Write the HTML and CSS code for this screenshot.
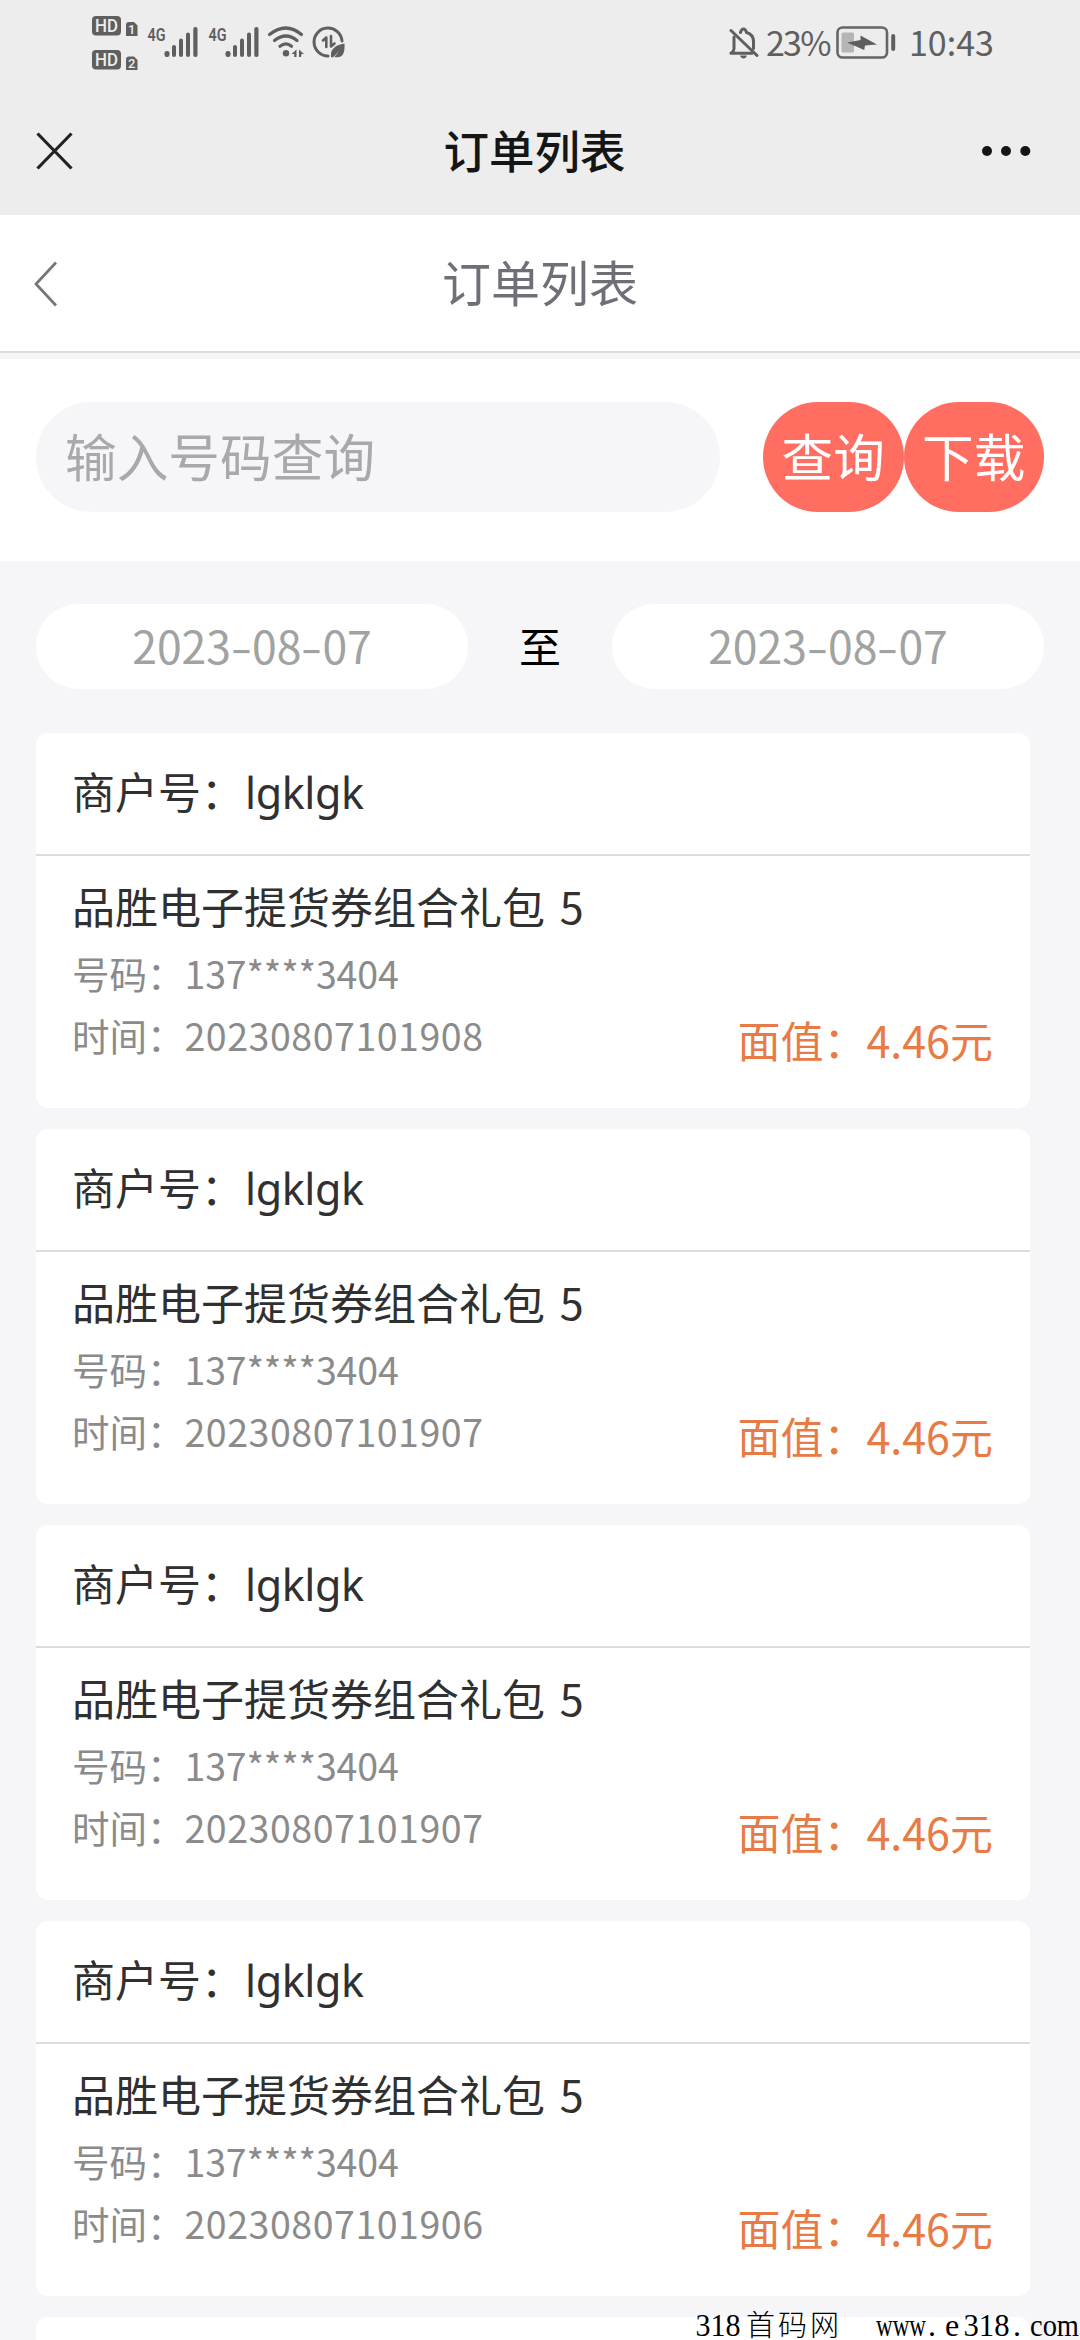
FILE: index.html
```html
<!DOCTYPE html>
<html lang="zh-CN">
<head>
<meta charset="utf-8">
<title>订单列表</title>
<link rel="stylesheet" href="styles.css">
</head>
<body>
<div class="screen">
  <div class="status">
    <svg class="status-left" width="260" height="64" viewBox="88 10 260 64">
      <g class="ink">
        <rect x="92" y="16" width="29" height="19.500" rx="4"/>
        <path d="M129 22h5l3.500 3.500V36H126V25q0-3 3-3z"/>
        <rect x="92" y="50" width="29" height="19.500" rx="4"/>
        <path d="M129 56.500h5l3.500 3.500v10H126V59.500q0-3 3-3z"/>
      </g>
      <g class="badge-text">
        <text x="95" y="32" font-size="18" textLength="23" lengthAdjust="spacingAndGlyphs">HD</text>
        <text x="95" y="66" font-size="18" textLength="23" lengthAdjust="spacingAndGlyphs">HD</text>
        <text x="128" y="34" font-size="13">1</text>
        <text x="128" y="68" font-size="13">2</text>
      </g>
      <g class="net-text">
        <text x="147.500" y="40.500" font-size="19" textLength="18" lengthAdjust="spacingAndGlyphs">4G</text>
        <text x="208.500" y="40.500" font-size="19" textLength="18" lengthAdjust="spacingAndGlyphs">4G</text>
      </g>
      <g class="ink">
        <rect x="164.500" y="51" width="5" height="6" rx="2.200"/><rect x="172" y="45" width="4" height="12" rx="2"/><rect x="179" y="38.500" width="4" height="18.500" rx="2"/><rect x="186" y="32.500" width="4" height="24.500" rx="2"/><rect x="193.300" y="27" width="4.200" height="30" rx="2"/>
        <rect x="225.500" y="51" width="5" height="6" rx="2.200"/><rect x="233" y="45" width="4" height="12" rx="2"/><rect x="240" y="38.500" width="4" height="18.500" rx="2"/><rect x="247" y="32.500" width="4" height="24.500" rx="2"/><rect x="254.300" y="27" width="4.200" height="30" rx="2"/>
        <circle cx="286" cy="53.300" r="3.200"/>
        <path d="M296.500 49.500V57h-2.300v-3h-2.700zM299 49.500l5 4.500h-2.500l-.5 3h-2z"/>
      </g>
      <g class="line">
        <path d="M269.500 34.500q16.500-13 32 0M274.500 40.500q11.500-9 22.500 0M280 46.200q6-4.600 11.500 0" stroke-width="3.200"/>
        <path d="M328 56A14 14 0 1 1 342 41" stroke-width="3"/>
        <path d="M323 40.500l3.300-3V47M331 36v10.500l3.500-3" stroke-width="2.600"/>
      </g>
      <path class="ink" d="M331 57q-1.500-11 13.500-13.500q1 16-10 13.500l5-6.500-6.500 7z"/>
    </svg>
    <div class="status-right">
      <svg width="30" height="34" viewBox="728 24 30 34">
        <g class="line" stroke-width="3">
          <path d="M730 29.500L756 54.500"/>
          <path d="M733 36v12q0 2-3 4.300h21M739.500 31.500q1-3.500 3-3.500t3 3.500q7 2 7 9v7"/>
        </g>
        <path class="ink" d="M739 54.500h7q-1 3-3.500 3t-3.500-3z"/>
      </svg>
      <span class="pct">23%</span>
      <svg width="62" height="34" viewBox="834 25 62 34">
        <rect x="836.500" y="27.500" width="49.500" height="30" rx="5" fill="none" stroke="#666" stroke-width="2.600"/>
        <rect x="840.500" y="32.500" width="12.500" height="20" rx="1.500" fill="#b5b5b5"/>
        <path class="ink" d="M846 42.500l13.500-2.500v-4.500L876 44.500l-12 1-.8 4.500z"/>
        <rect class="ink" x="890.200" y="34" width="4" height="17" rx="2"/>
      </svg>
      <span class="clock">10:43</span>
    </div>
  </div>
  <div class="wxbar">
    <svg width="40" height="40" viewBox="0 0 40 40"><path d="M2.500 2.500l34 35M36.500 2.500l-34 35" stroke="#222" stroke-width="3.200" fill="none"/></svg>
    <h1 class="wxtitle">订单列表</h1>
    <svg width="50" height="12" viewBox="0 0 50 12"><circle cx="6" cy="6" r="5" fill="#151515"/><circle cx="25" cy="6" r="5" fill="#151515"/><circle cx="44.300" cy="6" r="5" fill="#151515"/></svg>
  </div>
  <div class="nav">
    <svg width="24" height="46" viewBox="0 0 24 46"><path d="M22 1.500L2 23l20 21.500" stroke="#777" stroke-width="2.800" fill="none"/></svg>
    <h2 class="navtitle">订单列表</h2>
  </div>
  <div class="search">
    <div class="field">输入号码查询</div>
    <div class="btn">查询</div>
    <div class="btn">下载</div>
  </div>
  <div class="dates">
    <div class="pill">2023<i>-</i>08<i>-</i>07</div>
    <span class="to">至</span>
    <div class="pill">2023<i>-</i>08<i>-</i>07</div>
  </div>
  <div class="list">
    <div class="card">
      <div class="merchant">商户号：<span class="mid">lgklgk</span></div>
      <div class="body">
        <div class="name">品胜电子提货券组合礼包 5</div>
        <div class="row phone">号码：<span>137<b>****</b>3404</span></div>
        <div class="row time">时间：<span>20230807101908</span></div>
        <div class="price">面值：<span>4.46</span>元</div>
      </div>
    </div>
    <div class="card">
      <div class="merchant">商户号：<span class="mid">lgklgk</span></div>
      <div class="body">
        <div class="name">品胜电子提货券组合礼包 5</div>
        <div class="row phone">号码：<span>137<b>****</b>3404</span></div>
        <div class="row time">时间：<span>20230807101907</span></div>
        <div class="price">面值：<span>4.46</span>元</div>
      </div>
    </div>
    <div class="card">
      <div class="merchant">商户号：<span class="mid">lgklgk</span></div>
      <div class="body">
        <div class="name">品胜电子提货券组合礼包 5</div>
        <div class="row phone">号码：<span>137<b>****</b>3404</span></div>
        <div class="row time">时间：<span>20230807101907</span></div>
        <div class="price">面值：<span>4.46</span>元</div>
      </div>
    </div>
    <div class="card">
      <div class="merchant">商户号：<span class="mid">lgklgk</span></div>
      <div class="body">
        <div class="name">品胜电子提货券组合礼包 5</div>
        <div class="row phone">号码：<span>137<b>****</b>3404</span></div>
        <div class="row time">时间：<span>20230807101906</span></div>
        <div class="price">面值：<span>4.46</span>元</div>
      </div>
    </div>
    <div class="card"></div>
  </div>
  <svg class="watermark" width="390" height="36" viewBox="690 2304 390 36">
    <text x="695.500" y="2335.500" textLength="45" lengthAdjust="spacingAndGlyphs">318</text>
    <text class="wm-cjk" x="746" y="2336" textLength="93" lengthAdjust="spacing">首码网</text>
    <text x="876" y="2335.500" textLength="50" lengthAdjust="spacingAndGlyphs">www</text>
    <text x="928" y="2335.500">.</text>
    <text x="945" y="2335.500">e</text>
    <text x="963.500" y="2335.500" textLength="46" lengthAdjust="spacingAndGlyphs">318</text>
    <text x="1013" y="2335.500">.</text>
    <text x="1030" y="2335.500" textLength="49" lengthAdjust="spacingAndGlyphs">com</text>
  </svg>
</div>
</body>
</html>
```
FILE: styles.css
```css
* { box-sizing: border-box; }
body { margin: 0; }
.screen {
  position: relative;
  width: 1080px;
  height: 2340px;
  overflow: hidden;
  background: #f6f6f8;
  font-family: "Noto Sans CJK SC", "Noto Sans", sans-serif;
}
svg { display: block; flex: none; }
.ink { fill: #5f5f5f; }
.line { fill: none; stroke: #5f5f5f; stroke-linecap: round; stroke-linejoin: round; }
.badge-text { fill: #ededed; font-family: Roboto, sans-serif; font-weight: 500; }
.net-text { fill: #5f5f5f; font-family: Roboto, sans-serif; font-weight: 600; }

.status {
  display: flex;
  justify-content: space-between;
  height: 86px;
  padding: 10px 87px 0 88px;
  background: #ededed;
}
.status-right {
  display: flex;
  align-items: center;
  height: 64px;
  color: #5f5f5f;
  font-size: 34px;
  line-height: 40px;
}
.pct { margin: 0 6px 0 7px; width: 63px; letter-spacing: -1.800px; white-space: nowrap; }
.clock { margin-left: 12px; width: 84px; white-space: nowrap; }

.wxbar {
  display: flex;
  align-items: center;
  justify-content: space-between;
  height: 129px;
  padding: 0 49px 0 35px;
  background: #ededed;
}
.wxtitle { margin: 0 0 3px 13px; color: #151515; font-size: 45.500px; line-height: 60px; font-weight: 500; }

.nav {
  display: flex;
  align-items: center;
  height: 144px;
  padding: 0 0 1px 34px;
  border-bottom: 6px solid #f6f6f7;
  background: linear-gradient(#dcdcdc, #dcdcdc) 0 136px / 100% 2px no-repeat #fff;
}
.navtitle { margin: 0 0 5px 384px; color: #6f6f78; font-size: 49px; line-height: 64px; font-weight: 400; }

.search {
  display: flex;
  height: 202px;
  padding: 43px 36px 0;
  background: #fff;
}
.field, .btn { height: 110px; border-radius: 55px; font-size: 51.700px; line-height: 105px; }
.field { width: 684px; margin-right: 43px; padding-left: 29px; background: #f6f6f8; color: #a9a9ab; }
.btn { width: 140.500px; background: #ff6e60; color: #fff; text-align: center; }

.dates {
  display: flex;
  justify-content: space-between;
  align-items: center;
  padding: 43px 36px 44px;
}
.pill {
  width: 432px;
  height: 85px;
  border-radius: 43px;
  background: #fff;
  color: #9fa3a1;
  font-size: 44.500px;
  line-height: 81px;
  text-align: center;
}
.pill i { display: inline-block; width: 21px; font-style: normal; transform: scaleX(1.4); }
.to { color: #000; font-size: 42px; line-height: 80px; margin-bottom: 3px; }

.list { display: grid; gap: 21px; padding: 0 50px 0 36px; }
.card { height: 375px; border-radius: 12px; background: #fff; color: #303030; font-size: 43px; }
.merchant { height: 123px; padding-left: 36px; border-bottom: 2px solid #dcdcdc; line-height: 115px; }
.mid { margin-left: 1px; font-family: "Noto Sans", sans-serif; letter-spacing: -0.400px; }
.body { display: grid; grid-template-columns: auto auto; justify-content: space-between; padding: 19px 37px 0 36px; line-height: 60px; }
.name { grid-column: 1 / 3; margin-bottom: 7px; word-spacing: 5px; }
.row { grid-column: 1; color: #8b8b8b; font-size: 37.500px; line-height: 62px; }
.row b { font-weight: 400; }
.phone span { letter-spacing: -0.150px; }
.time span { letter-spacing: 0.550px; }
.price { grid-column: 2; grid-row: 3; color: #e87b45; line-height: 71px; }

.watermark { position: absolute; right: 0; bottom: 0; fill: #000; font-family: "Liberation Serif", serif; font-size: 32px; }
.wm-cjk { font-family: "Noto Sans CJK SC", sans-serif; font-weight: 300; font-size: 29px; }
```
